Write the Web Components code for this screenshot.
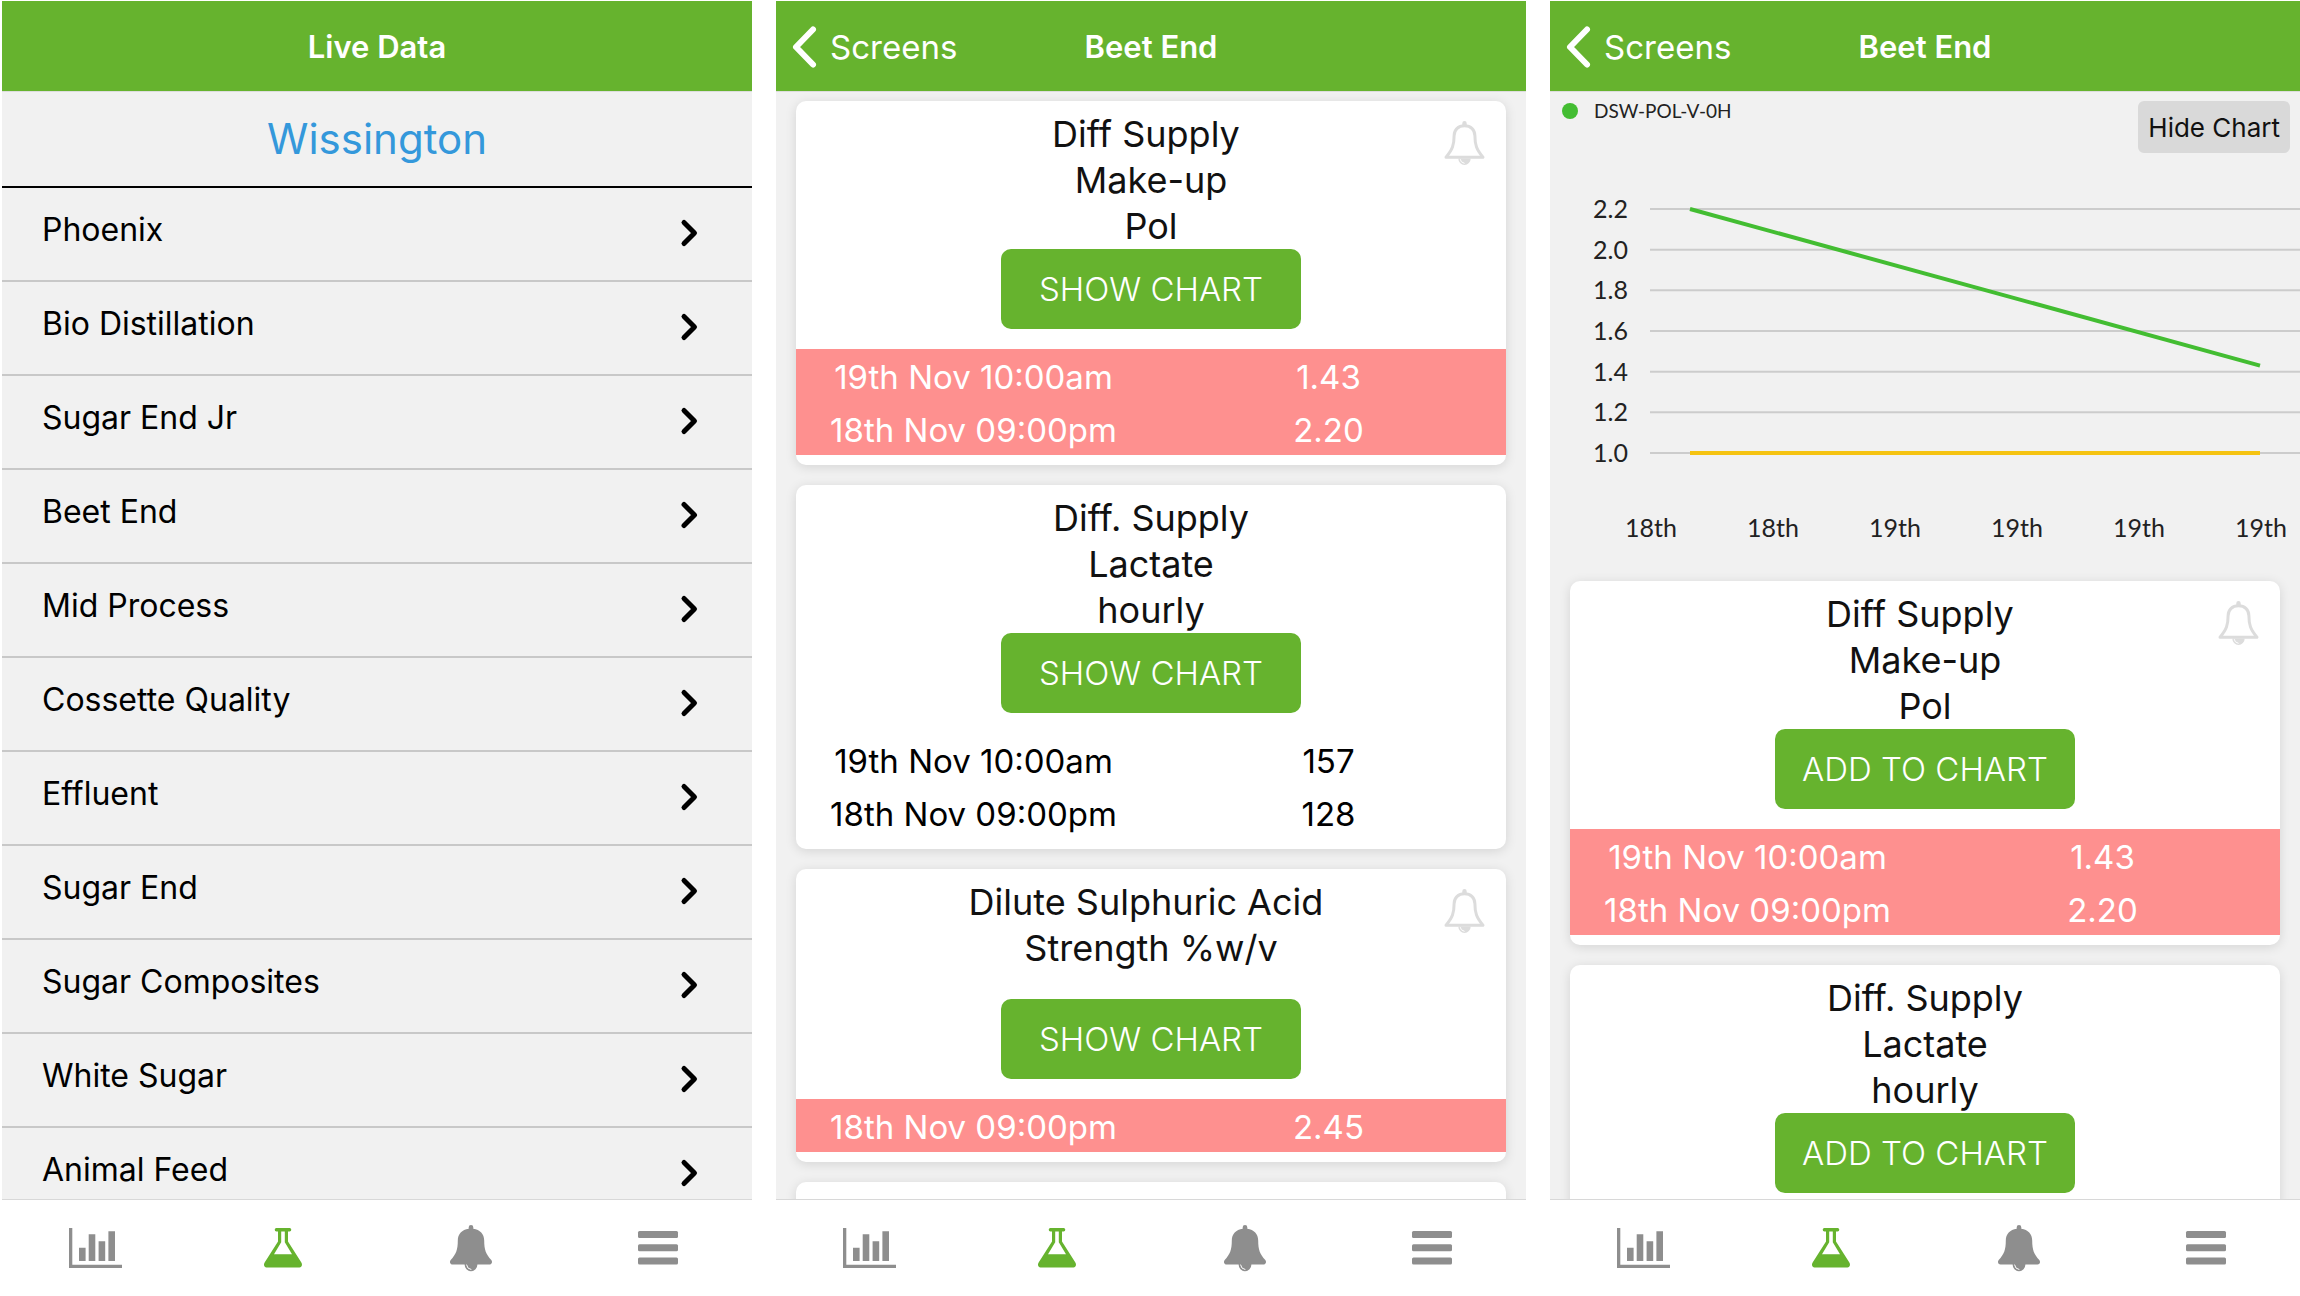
<!DOCTYPE html>
<html lang="en">
<head>
<meta charset="utf-8">
<title>Live Data</title>
<style>
  html, body { margin: 0; height: 100%; }
  body {
    background: #fff;
    color: #000;
    font-family: Inter, "Liberation Sans", sans-serif;
    font-size: 32px;
    --green: #66b32e;
    --panel: #f1f1f1;
    --alert: #fe908f;
  }
</style>
</head>
<body>
<screen-board>
  <app-screen heading="Live Data">
    <site-name>Wissington</site-name>
    <screen-list>
      <screen-row>Phoenix</screen-row>
      <screen-row>Bio Distillation</screen-row>
      <screen-row>Sugar End Jr</screen-row>
      <screen-row>Beet End</screen-row>
      <screen-row>Mid Process</screen-row>
      <screen-row>Cossette Quality</screen-row>
      <screen-row>Effluent</screen-row>
      <screen-row>Sugar End</screen-row>
      <screen-row>Sugar Composites</screen-row>
      <screen-row>White Sugar</screen-row>
      <screen-row>Animal Feed</screen-row>
    </screen-list>
  </app-screen>

  <app-screen heading="Beet End" back="Screens">
    <card-stack>
      <reading-card alert action="SHOW CHART" readings="19th Nov 10:00am|1.43;18th Nov 09:00pm|2.20">Diff Supply <br>Make-up<br>Pol</reading-card>
      <reading-card action="SHOW CHART" readings="19th Nov 10:00am|157;18th Nov 09:00pm|128">Diff. Supply<br>Lactate<br>hourly</reading-card>
      <reading-card alert action="SHOW CHART" readings="18th Nov 09:00pm|2.45">Dilute Sulphuric Acid <br>Strength %w/v</reading-card>
      <reading-card></reading-card>
    </card-stack>
  </app-screen>

  <app-screen heading="Beet End" back="Screens">
    <card-stack>
      <trend-chart series="DSW-POL-V-0H"></trend-chart>
      <reading-card alert action="ADD TO CHART" readings="19th Nov 10:00am|1.43;18th Nov 09:00pm|2.20">Diff Supply <br>Make-up<br>Pol</reading-card>
      <reading-card action="ADD TO CHART">Diff. Supply<br>Lactate<br>hourly</reading-card>
    </card-stack>
  </app-screen>
</screen-board>

<script>
const define = (name, render) => customElements.define(name, class extends HTMLElement {
  connectedCallback() {
    if (this.shadowRoot) return;
    this.attachShadow({ mode: 'open' }).innerHTML = render(this);
  }
});

const ICONS = {
  chart: [53, 40, `<path fill="currentColor" d="M0 0h3.3v36.7H53V40H0zM10 19.7h6.6V33H10zM19.7 6.3h6.6V33h-6.6zM29.6 13.3h6.6V33h-6.6zM39.4 3.3H46V33h-6.6z"/>`],
  flask: [38, 40, `<path fill="currentColor" fill-rule="evenodd" d="M12.4 0H25.6a1.7 1.7 0 0 1 0 3.4H24V13.4L37.2 34.2C39 37.2 37.6 39.6 34.4 39.6H3.6C.4 39.6-1 37.2.8 34.2L14 13.4V3.4H12.4a1.7 1.7 0 0 1 0-3.4zM17.2 3.4V14.3L10 26.3H28L20.8 14.3V3.4z"/>`],
  bell: [42, 47, `<path fill="currentColor" d="M21 0a2.3 2.3 0 0 1 2.3 2.3V3.8C30 4.6 34.2 9.2 34.2 15.6 34.2 25 36 29.4 41.3 35.1 42.8 37 41.8 39.6 39.5 39.6H27.4a6.4 6.6 0 0 1-12.8 0H2.5C.2 39.6-.8 37 .7 35.1 6 29.4 7.8 25 7.8 15.6 7.8 9.2 12 4.6 18.7 3.8V2.3A2.3 2.3 0 0 1 21 0z"/><path fill="none" stroke="#fff" stroke-width="1" stroke-linecap="round" d="M16.6 40q.4 4 4.4 4.5"/>`],
  bellOutline: [41, 44, `<path fill="none" stroke="currentColor" stroke-width="3" stroke-linejoin="round" d="M20.5 4.8C27 4.8 30.9 9 30.9 14.8 30.9 24 32.5 28.5 39 36.3H2C8.5 28.5 10.1 24 10.1 14.8 10.1 9 14 4.8 20.5 4.8z"/><path fill="currentColor" d="M18.3 5V2.2a2.2 2.2 0 0 1 4.4 0V5zM14.3 37.5H26.7a6.2 6.5 0 0 1-12.4 0z"/><path fill="none" stroke="#fff" stroke-width="1" stroke-linecap="round" d="M16.2 38.5q.3 3 4 3.8"/>`],
  menu: [40, 34, `<g fill="currentColor"><rect width="40" height="7" rx="1.5"/><rect y="13.3" width="40" height="7" rx="1.5"/><rect y="26.5" width="40" height="7" rx="1.5"/></g>`],
  next: [17, 36, `<path fill="none" stroke="currentColor" stroke-width="5" stroke-linecap="round" stroke-linejoin="round" d="M3 7.5 13.5 18 3 28.5"/>`],
  back: [25, 42, `<path fill="none" stroke="currentColor" stroke-width="6" stroke-linecap="round" stroke-linejoin="round" d="M21 3.5 4 21 21 38.5"/>`]
};

define('app-icon', el => {
  const [w, h, art] = ICONS[el.getAttribute('name')];
  return `<style>:host{display:block;flex:none}svg{display:block;overflow:visible}</style>
    <svg width="${w}" height="${h}" viewBox="0 0 ${w} ${h}" aria-hidden="true">${art}</svg>`;
});

define('screen-board', () => `
  <style>
    :host { display: grid; grid-template-columns: repeat(3, minmax(0, 1fr)); gap: 24px;
            height: 100vh; box-sizing: border-box; padding: 1px 0 0 2px; overflow: hidden; }
  </style><slot></slot>`);

define('app-screen', el => `
  <style>
    :host { display: flex; flex-direction: column; min-height: 0; background: var(--panel); }
    main { flex: 1; min-height: 0; overflow: hidden; }
  </style>
  <nav-header heading="${el.getAttribute('heading')}" back="${el.getAttribute('back') || ''}"></nav-header>
  <main><slot></slot></main>
  <tab-bar></tab-bar>`);

define('nav-header', el => {
  const back = el.getAttribute('back');
  return `
  <style>
    :host { display: block; }
    header { display: grid; grid-template-columns: 1fr auto 1fr; align-items: center; height: 88px; padding-top: 2px;
             background: var(--green); border-bottom: 1px solid #ddd; color: #fff; }
    h1 { margin: 0; grid-column: 2; font-size: 31px; font-weight: 600; line-height: 40px; }
    button { display: flex; align-items: center; justify-self: start; gap: 13px; padding: 0 0 0 16px;
             border: 0; background: none; color: inherit; font: inherit; font-size: 33px; line-height: 40px; }
  </style>
  <header>
    ${back ? `<button type="button"><app-icon name="back"></app-icon>${back}</button>` : ''}
    <h1>${el.getAttribute('heading')}</h1>
  </header>`;
});

define('tab-bar', () => `
  <style>
    :host { display: block; }
    nav { display: grid; grid-template-columns: repeat(4, 1fr); height: 96px;
          border-top: 1px solid #d8d8d8; background: #fff; }
    a { display: flex; align-items: center; justify-content: center; color: #8e8e8e; }
    a[aria-current] { color: var(--green); }
  </style>
  <nav>
    <a href="#reports" aria-label="Reports"><app-icon name="chart"></app-icon></a>
    <a href="#live" aria-label="Live data" aria-current="page"><app-icon name="flask"></app-icon></a>
    <a href="#alerts" aria-label="Alerts"><app-icon name="bell"></app-icon></a>
    <a href="#menu" aria-label="Menu"><app-icon name="menu"></app-icon></a>
  </nav>`);

define('site-name', () => `
  <style>
    :host { display: block; border-bottom: 2px solid #000; }
    h2 { margin: 0; color: #3498db; font-size: 42px; font-weight: 400; line-height: 94px; text-align: center; }
  </style><h2><slot></slot></h2>`);

define('screen-list', () => `
  <style>:host { display: flex; flex-direction: column; }</style><slot></slot>`);

define('screen-row', () => `
  <style>
    :host { display: block; }
    a { display: flex; align-items: flex-end; justify-content: space-between; padding: 21px 54px 29px 40px;
        border-bottom: 2px solid #c8c8c8; color: #000; text-decoration: none; line-height: 42px; }
  </style><a href="#screen"><slot></slot><app-icon name="next"></app-icon></a>`);

define('card-stack', () => `
  <style>:host { display: flex; flex-direction: column; gap: 20px; padding: 9px 20px 20px; }</style><slot></slot>`);

define('reading-card', el => {
  const alert = el.hasAttribute('alert');
  const action = el.getAttribute('action');
  const rows = (el.getAttribute('readings') || '').split(';').filter(Boolean)
    .map(r => '<tr>' + r.split('|').map(c => `<td>${c}</td>`).join('') + '</tr>').join('');
  return `
  <style>
    :host { display: block; }
    article { position: relative; display: flex; flex-direction: column; align-items: center; min-height: 260px;
              padding: 10px 0; border-radius: 10px; background: #fff; box-shadow: 0 2px 12px rgba(0,0,0,.12); }
    h3 { margin: 0; min-height: 120px; color: #111; font-size: 36px; font-weight: 400; line-height: 46px;
         text-align: center; white-space: pre; }
    .action { width: 300px; height: 80px; padding: 0; border: 0; border-radius: 10px; background: var(--green);
              color: #fff; font: inherit; font-size: 33px; font-weight: 300; }
    .bell { position: absolute; top: 20px; right: 21px; padding: 0; border: 0; background: none; color: #dcdcdc; }
    table { width: 100%; margin-top: 20px; border-collapse: collapse; table-layout: fixed; font-size: 33px; }
    td { height: 51px; padding: 2px 0 0; text-align: center; line-height: 40px; }
    table.alert { background: var(--alert); color: #fff; }
  </style>
  <article>
    <h3><slot></slot></h3>
    ${alert ? '<button class="bell" type="button" aria-label="Set alert"><app-icon name="bellOutline"></app-icon></button>' : ''}
    ${action ? `<button class="action" type="button">${action}</button>` : ''}
    ${rows ? `<table class="${alert ? 'alert' : ''}"><tbody>${rows}</tbody></table>` : ''}
  </article>`;
});

define('trend-chart', el => {
  const top = 56, bottom = 300, min = 1, max = 2.2;
  const y = v => bottom - (v - min) / (max - min) * (bottom - top);
  const grid = [2.2, 2.0, 1.8, 1.6, 1.4, 1.2, 1.0].map(v => `
    <line x1="100" x2="750" y1="${y(v)}" y2="${y(v)}" stroke="#ccc" stroke-width="2"/>
    <text x="78" y="${y(v) + 9}" text-anchor="end">${v.toFixed(1)}</text>`).join('');
  const days = ['18th', '18th', '19th', '19th', '19th', '19th'].map((d, i) =>
    `<text x="${101 + i * 122}" y="384" text-anchor="middle">${d}</text>`).join('');
  return `
  <style>
    :host { display: block; margin: 0 -20px -20px; }
    .bar { display: flex; align-items: flex-start; justify-content: space-between; padding: 0 10px 0 12px; }
    .legend { display: flex; align-items: center; gap: 16px; color: #222; font-family: Lato, sans-serif;
              font-size: 19px; line-height: 20px; }
    .dot { width: 16px; height: 16px; border-radius: 50%; background: #43bd32; }
    button { height: 52px; padding: 0 10px; border: 0; border-radius: 6px; background: #d9d9d9; color: #111;
             font: inherit; font-size: 26px; }
    svg { display: block; width: 100%; height: auto; }
    text { fill: #222; font-family: Lato, sans-serif; font-size: 25px; }
  </style>
  <div class="bar">
    <div class="legend"><span class="dot"></span>${el.getAttribute('series')}</div>
    <button type="button">Hide Chart</button>
  </div>
  <svg viewBox="0 0 750 428" role="img" aria-label="Trend of ${el.getAttribute('series')}">
    ${grid}
    <line x1="140" x2="710" y1="${y(1)}" y2="${y(1)}" stroke="#f5c311" stroke-width="4"/>
    <line x1="140" x2="710" y1="${y(2.2)}" y2="${y(1.43)}" stroke="#43bd32" stroke-width="4"/>
    ${days}
  </svg>`;
});
</script>
</body>
</html>
